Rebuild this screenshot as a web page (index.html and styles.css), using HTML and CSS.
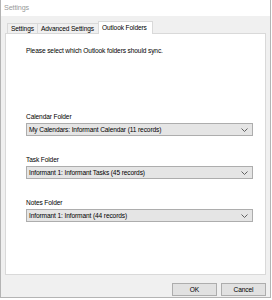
FILE: index.html
```html
<!DOCTYPE html>
<html>
<head>
<meta charset="utf-8">
<link rel="stylesheet" href="styles.css">
</head>
<body>
<div class="window">
  <div class="titlebar">Settings</div>
  <div class="client">
    <div class="tabs">
      <div class="tab t1">Settings</div>
      <div class="tab t2">Advanced Settings</div>
      <div class="tab t3 active">Outlook Folders</div>
    </div>
    <div class="panel">
      <div class="intro">Please select which Outlook folders should sync.</div>
      <div class="field f1">
        <div class="label">Calendar Folder</div>
        <div class="combo"><span>My Calendars: Informant Calendar (11 records)</span><svg class="chev" width="7" height="4" viewBox="0 0 7 4"><polyline points="0.5,0.5 3.5,3.5 6.5,0.5" fill="none" stroke="#606060" stroke-width="1"/></svg></div>
      </div>
      <div class="field">
        <div class="label">Task Folder</div>
        <div class="combo"><span>Informant 1: Informant Tasks (45 records)</span><svg class="chev" width="7" height="4" viewBox="0 0 7 4"><polyline points="0.5,0.5 3.5,3.5 6.5,0.5" fill="none" stroke="#606060" stroke-width="1"/></svg></div>
      </div>
      <div class="field">
        <div class="label">Notes Folder</div>
        <div class="combo"><span>Informant 1: Informant (44 records)</span><svg class="chev" width="7" height="4" viewBox="0 0 7 4"><polyline points="0.5,0.5 3.5,3.5 6.5,0.5" fill="none" stroke="#606060" stroke-width="1"/></svg></div>
      </div>
    </div>
    <div class="buttons">
      <div class="btn">OK</div>
      <div class="btn">Cancel</div>
    </div>
  </div>
</div>
</body>
</html>
```
FILE: styles.css
```css
html, body {
  margin: 0;
  padding: 0;
  background: #ffffff;
}
body {
  width: 272px;
  height: 300px;
  overflow: hidden;
  font-family: "Liberation Sans", Arial, sans-serif;
  font-size: 6.6px;
  letter-spacing: -0.12px;
  color: #000;
}
.window {
  width: 269px;
  height: 297px;
  border: 1px solid #b4b4b4;
  border-top: none;
  display: flex;
  flex-direction: column;
  background: #f0f0f0;
}
.titlebar {
  height: 16px;
  background: #ffffff;
  color: #9a9a9a;
  font-size: 7.2px;
  line-height: 16px;
  padding-left: 3px;
}
.client {
  flex: 1;
  display: flex;
  flex-direction: column;
  padding: 6px 4px 0 4px;
}
.tabs {
  display: flex;
  align-items: flex-end;
  height: 11px;
  padding-left: 2px;
  position: relative;
  z-index: 1;
}
.tab {
  height: 10px;
  line-height: 10px;
  border: 1px solid #d9d9d9;
  border-bottom: none;
  background: #f0f0f0;
  padding: 0 3px;
  box-sizing: border-box;
  margin-right: -1px;
  white-space: nowrap;
}
.tab.active {
  height: 13px;
  line-height: 11px;
  background: #ffffff;
  margin-bottom: -1px;
}
.t1 { width: 31px; }
.t2 { width: 62px; }
.t3 { width: 55px; }
.panel {
  height: 242px;
  background: #ffffff;
  border: 1px solid #d9d9d9;
  box-sizing: border-box;
  padding: 13px 12px 0 20px;
  display: flex;
  flex-direction: column;
}
.intro {
  line-height: 8px;
}
.field {
  display: flex;
  flex-direction: column;
  margin-top: 20px;
}
.field.f1 { margin-top: 58px; }
.label {
  line-height: 8px;
  margin-bottom: 2px;
}
.combo {
  height: 13px;
  background: #e5e5e5;
  border: 1px solid #adadad;
  box-sizing: border-box;
  display: flex;
  align-items: center;
  justify-content: space-between;
  padding: 0 4px 0 2px;
}
.chev { display: block; }
.buttons {
  display: flex;
  justify-content: flex-end;
  gap: 4px;
  margin-top: 8px;
}
.btn {
  width: 45px;
  height: 13px;
  background: #e1e1e1;
  border: 1px solid #adadad;
  box-sizing: border-box;
  display: flex;
  align-items: center;
  justify-content: center;
}
```
